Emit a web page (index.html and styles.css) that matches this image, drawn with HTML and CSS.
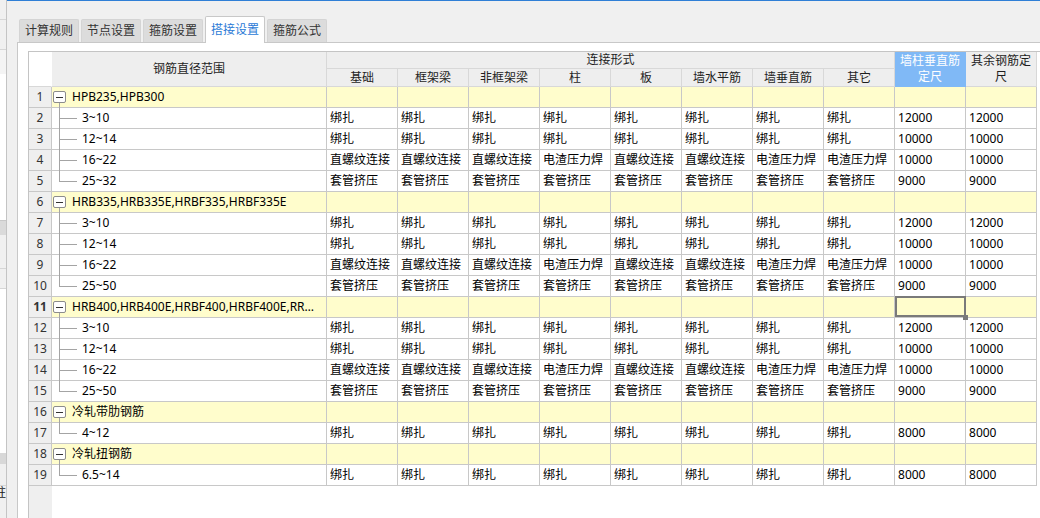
FILE: index.html
```html
<!DOCTYPE html>
<html lang="zh-CN">
<head>
<meta charset="utf-8">
<title>搭接设置</title>
<link rel="stylesheet" href="styles.css">
</head>
<body>
<div class="side">
  <div class="sp sp-a"></div>
  <div class="sp sp-b"></div>
  <div class="sp sp-c"></div>
  <div class="sp sp-d"></div>
  <div class="sp sp-e"></div>
  <div class="sp sp-f"></div>
  <div class="sp sp-g"></div>
  <div class="sp sp-h"></div>
  <div class="sp sp-i"></div>
  <div class="sp sp-j"></div>
  <div class="sp sp-k"><span>柱</span></div>
</div>
<div class="main">
  <div class="tabs">
    <div class="tab">计算规则</div>
    <div class="tab">节点设置</div>
    <div class="tab">箍筋设置</div>
    <div class="tab active">搭接设置</div>
    <div class="tab">箍筋公式</div>
  </div>
  <div class="page">
    <div class="grid">
      <table>
        <colgroup>
          <col class="w-rn"><col class="w-rg">
          <col class="w-c"><col class="w-c"><col class="w-c"><col class="w-c"><col class="w-c">
          <col class="w-c"><col class="w-c"><col class="w-c"><col class="w-c"><col class="w-c">
        </colgroup>
        <thead>
          <tr class="h1">
            <th class="corner" rowspan="2"></th>
            <th rowspan="2">钢筋直径范围</th>
            <th colspan="8">连接形式</th>
            <th rowspan="2" class="hl">墙柱垂直筋<br>定尺</th>
            <th rowspan="2">其余钢筋定<br>尺</th>
          </tr>
          <tr class="h2">
            <th>基础</th><th>框架梁</th><th>非框架梁</th><th>柱</th><th>板</th><th>墙水平筋</th><th>墙垂直筋</th><th>其它</th>
          </tr>
        </thead>
        <tbody>
          <tr class="cat"><td class="rn">1</td><td class="rg catc"><span class="box"></span>HPB235,HPB300</td><td></td><td></td><td></td><td></td><td></td><td></td><td></td><td></td><td></td><td></td></tr>
          <tr><td class="rn">2</td><td class="rg leaf">3~10</td><td>绑扎</td><td>绑扎</td><td>绑扎</td><td>绑扎</td><td>绑扎</td><td>绑扎</td><td>绑扎</td><td>绑扎</td><td>12000</td><td>12000</td></tr>
          <tr><td class="rn">3</td><td class="rg leaf">12~14</td><td>绑扎</td><td>绑扎</td><td>绑扎</td><td>绑扎</td><td>绑扎</td><td>绑扎</td><td>绑扎</td><td>绑扎</td><td>10000</td><td>10000</td></tr>
          <tr><td class="rn">4</td><td class="rg leaf">16~22</td><td>直螺纹连接</td><td>直螺纹连接</td><td>直螺纹连接</td><td>电渣压力焊</td><td>直螺纹连接</td><td>直螺纹连接</td><td>电渣压力焊</td><td>电渣压力焊</td><td>10000</td><td>10000</td></tr>
          <tr><td class="rn">5</td><td class="rg leaf last">25~32</td><td>套管挤压</td><td>套管挤压</td><td>套管挤压</td><td>套管挤压</td><td>套管挤压</td><td>套管挤压</td><td>套管挤压</td><td>套管挤压</td><td>9000</td><td>9000</td></tr>
          <tr class="cat"><td class="rn">6</td><td class="rg catc"><span class="box"></span>HRB335,HRB335E,HRBF335,HRBF335E</td><td></td><td></td><td></td><td></td><td></td><td></td><td></td><td></td><td></td><td></td></tr>
          <tr><td class="rn">7</td><td class="rg leaf">3~10</td><td>绑扎</td><td>绑扎</td><td>绑扎</td><td>绑扎</td><td>绑扎</td><td>绑扎</td><td>绑扎</td><td>绑扎</td><td>12000</td><td>12000</td></tr>
          <tr><td class="rn">8</td><td class="rg leaf">12~14</td><td>绑扎</td><td>绑扎</td><td>绑扎</td><td>绑扎</td><td>绑扎</td><td>绑扎</td><td>绑扎</td><td>绑扎</td><td>10000</td><td>10000</td></tr>
          <tr><td class="rn">9</td><td class="rg leaf">16~22</td><td>直螺纹连接</td><td>直螺纹连接</td><td>直螺纹连接</td><td>电渣压力焊</td><td>直螺纹连接</td><td>直螺纹连接</td><td>电渣压力焊</td><td>电渣压力焊</td><td>10000</td><td>10000</td></tr>
          <tr><td class="rn">10</td><td class="rg leaf last">25~50</td><td>套管挤压</td><td>套管挤压</td><td>套管挤压</td><td>套管挤压</td><td>套管挤压</td><td>套管挤压</td><td>套管挤压</td><td>套管挤压</td><td>9000</td><td>9000</td></tr>
          <tr class="cat"><td class="rn on">11</td><td class="rg catc"><span class="box"></span>HRB400,HRB400E,HRBF400,HRBF400E,RR…</td><td></td><td></td><td></td><td></td><td></td><td></td><td></td><td></td><td class="sel"></td><td></td></tr>
          <tr><td class="rn">12</td><td class="rg leaf">3~10</td><td>绑扎</td><td>绑扎</td><td>绑扎</td><td>绑扎</td><td>绑扎</td><td>绑扎</td><td>绑扎</td><td>绑扎</td><td>12000</td><td>12000</td></tr>
          <tr><td class="rn">13</td><td class="rg leaf">12~14</td><td>绑扎</td><td>绑扎</td><td>绑扎</td><td>绑扎</td><td>绑扎</td><td>绑扎</td><td>绑扎</td><td>绑扎</td><td>10000</td><td>10000</td></tr>
          <tr><td class="rn">14</td><td class="rg leaf">16~22</td><td>直螺纹连接</td><td>直螺纹连接</td><td>直螺纹连接</td><td>电渣压力焊</td><td>直螺纹连接</td><td>直螺纹连接</td><td>电渣压力焊</td><td>电渣压力焊</td><td>10000</td><td>10000</td></tr>
          <tr><td class="rn">15</td><td class="rg leaf last">25~50</td><td>套管挤压</td><td>套管挤压</td><td>套管挤压</td><td>套管挤压</td><td>套管挤压</td><td>套管挤压</td><td>套管挤压</td><td>套管挤压</td><td>9000</td><td>9000</td></tr>
          <tr class="cat"><td class="rn">16</td><td class="rg catc"><span class="box"></span>冷轧带肋钢筋</td><td></td><td></td><td></td><td></td><td></td><td></td><td></td><td></td><td></td><td></td></tr>
          <tr><td class="rn">17</td><td class="rg leaf last">4~12</td><td>绑扎</td><td>绑扎</td><td>绑扎</td><td>绑扎</td><td>绑扎</td><td>绑扎</td><td>绑扎</td><td>绑扎</td><td>8000</td><td>8000</td></tr>
          <tr class="cat"><td class="rn">18</td><td class="rg catc"><span class="box"></span>冷轧扭钢筋</td><td></td><td></td><td></td><td></td><td></td><td></td><td></td><td></td><td></td><td></td></tr>
          <tr><td class="rn">19</td><td class="rg leaf last">6.5~14</td><td>绑扎</td><td>绑扎</td><td>绑扎</td><td>绑扎</td><td>绑扎</td><td>绑扎</td><td>绑扎</td><td>绑扎</td><td>8000</td><td>8000</td></tr>
        </tbody>
      </table>
    </div>
  </div>
</div>
</body>
</html>
```
FILE: styles.css
```css
* { box-sizing: border-box; }
html, body { margin: 0; }
body {
  display: flex;
  width: 1040px;
  height: 518px;
  overflow: hidden;
  background: #f0f0f0;
  font-family: "Noto Sans", "Noto Sans CJK SC", sans-serif;
  font-size: 12px;
  color: #000;
}

/* left neighbour panel, mostly cut off */
.side {
  flex: none;
  width: 7px;
  border-right: 1px solid #c4c4c4;
  display: flex;
  flex-direction: column;
  overflow: hidden;
}
.sp { flex: none; background: #f0f0f0; }
.sp-a { height: 20px; border-bottom: 1px solid #d6d6d6; }
.sp-b { height: 30px; border-bottom: 1px solid #d6d6d6; }
.sp-c { height: 24px; background: #f4f4f4; }
.sp-d { height: 146px; background: #fff; }
.sp-e { height: 15px; background: #dadada; border-top: 1px solid #c8c8c8; }
.sp-f { height: 34px; border-bottom: 1px solid #d6d6d6; }
.sp-g { height: 20px; border-bottom: 1px solid #d6d6d6; }
.sp-h { height: 164px; background: #fff; }
.sp-i { height: 11px; background: #d8d8d8; }
.sp-j { height: 22px; border-bottom: 1px solid #d6d6d6; }
.sp-k {
  flex: 1;
  display: flex;
  justify-content: flex-end;
  line-height: 14px;
  color: #222;
}
.sp-k span { flex: none; }

/* main area */
.main {
  flex: 1;
  min-width: 0;
  display: flex;
  flex-direction: column;
  border-top: 1px solid #2f7fd6;
  padding: 15px 0 0 10px;
}
.tabs {
  display: flex;
  align-items: flex-end;
  gap: 2px;
  height: 26px;
  padding-left: 2px;
}
.tab {
  height: 23px;
  padding: 0 5px;
  line-height: 22px;
  background: #dcdcdc;
  color: #333;
  border: 1px solid #d4d4d4;
  border-bottom: none;
  border-radius: 2px 2px 0 0;
  white-space: nowrap;
}
.tab.active {
  position: relative;
  z-index: 1;
  height: 27px;
  margin-bottom: -1px;
  line-height: 25px;
  background: #fff;
  color: #2a7ad6;
  border-color: #c8c8c8;
}

.page {
  flex: 1;
  min-height: 0;
  display: flex;
  flex-direction: column;
  background: #fff;
  border-top: 1px solid #c8c8c8;
  border-left: 1px solid #c8c8c8;
  padding: 8px 0 0 10px;
}
.grid {
  flex: 1;
  overflow: hidden;
  border-left: 1px solid #c4c4c4;
  border-top: 1px solid #c4c4c4;
  background: linear-gradient(to right, #efefef 23px, #fff 23px);
}

table {
  border-collapse: separate;
  border-spacing: 0;
  table-layout: fixed;
  width: 1008px;
}
col.w-rn { width: 23px; }
col.w-rg { width: 275px; }
col.w-c { width: 71px; }

th, td {
  padding: 0;
  border-right: 1px solid #c8c8c8;
  border-bottom: 1px solid #c8c8c8;
}
th {
  line-height: 16px;
  font-weight: normal;
  color: #1e1e1e;
  background: #eeeeee;
  border-color: #d8d8d8;
  text-align: center;
  vertical-align: middle;
}
tr.h1 th { height: 17px; }
tr.h2 th { height: 18px; padding-top: 1px; }
th.corner { background: #fff; border-right-color: #fff; border-bottom-color: #d8d8d8; }
th.hl { background: #80b9f6; color: #fff; border-color: #80b9f6; }

td {
  height: 21px;
  line-height: 20px;
  padding-left: 3px;
  white-space: nowrap;
  vertical-align: middle;
  background: #fff;
}
tr.cat td { background: #fffdcc; }
td.rn, tr.cat td.rn {
  padding: 0;
  text-align: center;
  color: #333;
  background: #efefef;
}
td.rn.on { background: #7db7f4; color: #fff; font-weight: bold; }

/* tree column */
td.rg { position: relative; }
td.catc { padding-left: 1px; }
td.catc::after {
  content: "";
  position: absolute;
  left: 7px;
  top: 16px;
  bottom: -1px;
  width: 1px;
  background: #a4a4a4;
}
.box {
  display: inline-block;
  position: relative;
  width: 13px;
  height: 12px;
  margin-right: 6px;
  vertical-align: -2px;
  border: 1px solid #8c8c8c;
  border-radius: 2px;
  background: #fff;
}
.box::before {
  content: "";
  position: absolute;
  left: 2px;
  right: 2px;
  top: 5px;
  height: 1px;
  background: #333;
}
td.leaf { padding-left: 30px; }
td.leaf::before {
  content: "";
  position: absolute;
  left: 7px;
  top: -1px;
  bottom: -1px;
  width: 1px;
  background: #a4a4a4;
}
td.leaf.last::before { bottom: auto; height: 11px; }
td.leaf::after {
  content: "";
  position: absolute;
  left: 7px;
  top: 10px;
  width: 18px;
  height: 1px;
  background: #a4a4a4;
}

/* selected cell */
td.sel { position: relative; }
td.sel::after {
  content: "";
  position: absolute;
  left: 0;
  top: -1px;
  right: -1px;
  bottom: 0;
  border: 2px solid #7a7a7a;
}
td.sel::before {
  content: "";
  position: absolute;
  right: -3px;
  bottom: -3px;
  width: 5px;
  height: 5px;
  background: #7a7a7a;
  z-index: 2;
}
```
